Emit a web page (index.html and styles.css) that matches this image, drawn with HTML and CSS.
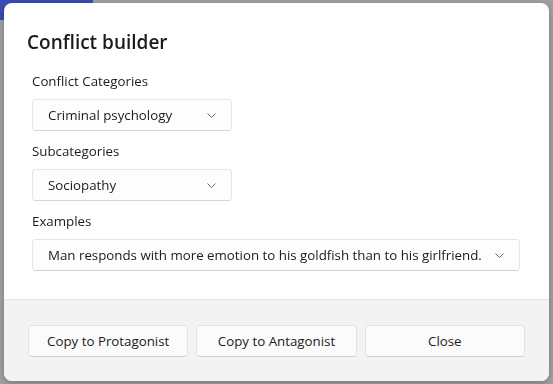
FILE: index.html
```html
<!DOCTYPE html>
<html lang="en">
<head>
    <meta charset="UTF-8">
    <meta name="viewport" content="width=device-width, initial-scale=1.0">
    <title>Conflict builder</title>
    <link rel="stylesheet" href="styles.css">
</head>
<body>
    <div class="app-behind">
        <div class="app-bar"></div>
    </div>

    <div class="dialog">
        <div class="dialog-body">
            <h2 class="dialog-title">Conflict builder</h2>

            <div class="field">
                <label>Conflict Categories</label>
                <div class="combo">
                    <span>Criminal psychology</span>
                    <svg class="chevron" width="9" height="5" viewBox="0 0 9 5"><path d="M0.5 0.5 L4.5 4.5 L8.5 0.5" fill="none" stroke="#6b6b6b" stroke-width="1"/></svg>
                </div>
            </div>

            <div class="field">
                <label>Subcategories</label>
                <div class="combo">
                    <span>Sociopathy</span>
                    <svg class="chevron" width="9" height="5" viewBox="0 0 9 5"><path d="M0.5 0.5 L4.5 4.5 L8.5 0.5" fill="none" stroke="#6b6b6b" stroke-width="1"/></svg>
                </div>
            </div>

            <div class="field">
                <label>Examples</label>
                <div class="combo combo-wide">
                    <span>Man responds with more emotion to his goldfish than to his girlfriend.</span>
                    <svg class="chevron" width="9" height="5" viewBox="0 0 9 5"><path d="M0.5 0.5 L4.5 4.5 L8.5 0.5" fill="none" stroke="#6b6b6b" stroke-width="1"/></svg>
                </div>
            </div>
        </div>

        <div class="dialog-footer">
            <button class="footer-button">Copy to Protagonist</button>
            <button class="footer-button">Copy to Antagonist</button>
            <button class="footer-button">Close</button>
        </div>
    </div>
</body>
</html>
```

FILE: styles.css
```css
body {
    margin: 0;
    background-color: #a0a0a0;
    font-family: "Open Sans", "Noto Sans", sans-serif;
    color: #1b1b1b;
    width: 553px;
    height: 384px;
    overflow: hidden;
}

.app-behind {
    height: 384px;
}

.app-bar {
    width: 93px;
    height: 20px;
    background-color: #3a4cb5;
}

/* dialog sits on top of the dimmed app */
.dialog {
    position: fixed;
    top: 3px;
    left: 4px;
    width: 545px;
    height: 378px;
    background-color: #ffffff;
    border-radius: 8px;
    box-shadow: 0 2px 6px rgba(0, 0, 0, 0.25);
    display: flex;
    flex-direction: column;
    overflow: hidden;
}

.dialog-body {
    flex: 1;
    padding: 25px 24px 0 23px;
}

.dialog-title {
    margin: 0 0 15px 0;
    font-size: 19px;
    font-weight: 600;
    line-height: 28px;
}

.field {
    display: flex;
    flex-direction: column;
    padding-left: 5px;
    margin-bottom: 10px;
}

.field label {
    font-size: 13.3px;
    line-height: 20px;
    margin-bottom: 8px;
}

.combo {
    width: 200px;
    height: 32px;
    box-sizing: border-box;
    display: flex;
    align-items: center;
    justify-content: space-between;
    padding: 0 15px 0 15px;
    background-color: #fdfdfd;
    border: 1px solid #e6e6e6;
    border-bottom-color: #d4d4d4;
    border-radius: 4px;
    font-size: 13.3px;
}

.combo-wide {
    width: 488px;
}

.chevron {
    flex-shrink: 0;
}

.dialog-footer {
    height: 82px;
    box-sizing: border-box;
    border-top: 1px solid #e5e5e5;
    background-color: #f3f3f3;
    padding: 25px 24px 24px 24px;
    display: flex;
    gap: 8px;
}

.footer-button {
    flex: 1;
    height: 32px;
    background-color: #fbfbfb;
    border: 1px solid #e3e3e3;
    border-bottom-color: #d0d0d0;
    border-radius: 4px;
    font-family: "Open Sans", "Noto Sans", sans-serif;
    font-size: 13.3px;
    color: #1b1b1b;
    cursor: pointer;
}
```
